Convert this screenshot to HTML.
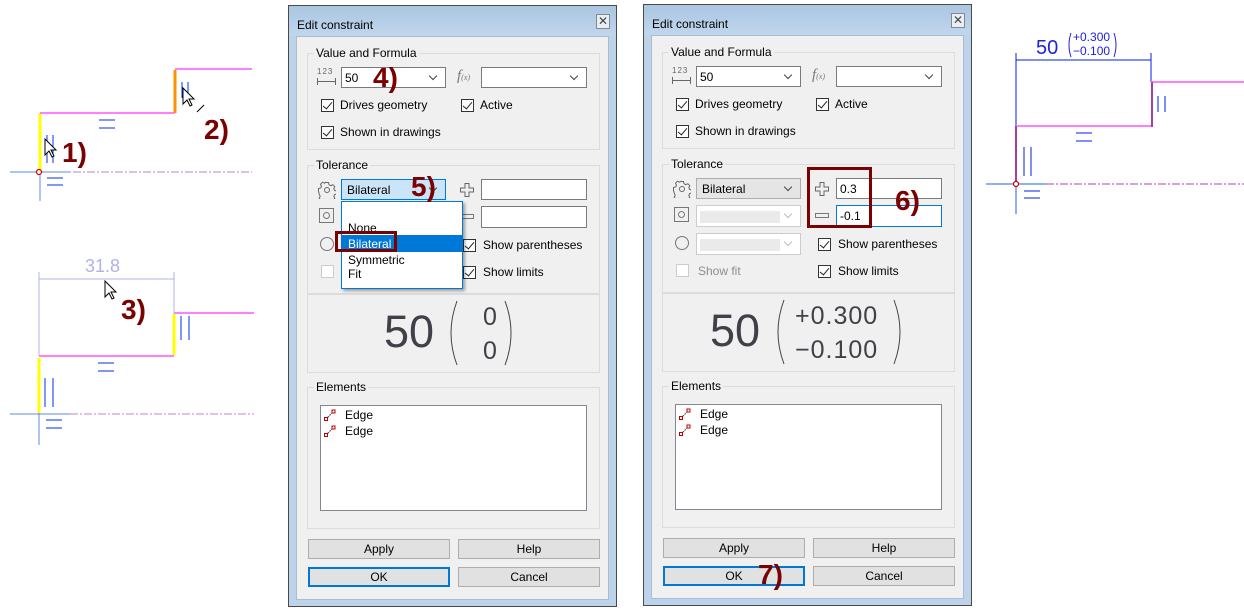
<!DOCTYPE html>
<html><head><meta charset="utf-8"><style>
*{margin:0;padding:0;box-sizing:border-box}
body{width:1244px;height:616px;background:#fff;position:relative;overflow:hidden;font-family:"Liberation Sans",sans-serif;font-size:12px;color:#000}
.a{position:absolute}
.dlg{position:absolute;width:329px;height:602px;border:1px solid #4a4a4a;background:#bcd3ea}
.tb{position:absolute;left:0;top:0;width:327px;height:30px;background:linear-gradient(#abc6e2,#c0d6ec)}
.cl{position:absolute;left:7px;top:30px;width:313px;height:564px;background:#f0f0f0;border:1px solid #a9bdd2}
.grp{position:absolute;border:1px solid #dcdcdc}
.lbl{position:absolute;background:#f0f0f0;padding:0 2px;line-height:13px}
.box{position:absolute;background:#fff;border:1px solid #7a7a7a}
.cb{position:absolute;width:13px;height:13px;border:1px solid #333;background:#fff}
.cb.on::after{content:"";position:absolute;left:3px;top:0px;width:4px;height:8px;border:solid #222;border-width:0 1.3px 1.3px 0;transform:rotate(40deg)}
.t{position:absolute;white-space:nowrap;line-height:14px}
.chev{position:absolute;width:6px;height:6px;border:solid #444;border-width:0 1px 1px 0;transform:rotate(45deg)}
.btn{position:absolute;width:142px;height:20px;background:#e1e1e1;border:1px solid #adadad;text-align:center;line-height:18px}
.btn.def{border:2px solid #0078d7;line-height:16px}
.red{position:absolute;color:#7b0000;font-weight:bold;font-size:28px;line-height:28px}
</style></head><body>

<svg class="a" style="left:0;top:0" width="290" height="460">
<g stroke-width="1">
<line x1="45" y1="172" x2="252" y2="172" stroke="#c080c0" stroke-dasharray="8,2,2,2"/>
<line x1="10" y1="172" x2="70" y2="172" stroke="#5a8de0"/>
<line x1="40" y1="140" x2="40" y2="201" stroke="#5a8de0"/>
<line x1="40" y1="113" x2="40" y2="170" stroke="#ffff00" stroke-width="3"/>
<line x1="40" y1="113" x2="175" y2="113" stroke="#ff80ff" stroke-width="2"/>
<line x1="175" y1="70" x2="175" y2="113" stroke="#ff9000" stroke-width="3"/>
<line x1="175" y1="69" x2="252" y2="69" stroke="#ff80ff" stroke-width="2"/>
<circle cx="39" cy="172" r="2.5" fill="#fff" stroke="#d00000" stroke-width="1.2"/>
<g stroke="#0030f0">
<line x1="99" y1="120" x2="115" y2="120"/><line x1="99" y1="128" x2="115" y2="128"/>
<line x1="47" y1="135" x2="47" y2="163"/><line x1="53" y1="135" x2="53" y2="163"/>
<line x1="47" y1="178" x2="63" y2="178"/><line x1="47" y1="185" x2="63" y2="185"/>
<line x1="182" y1="82" x2="182" y2="98"/><line x1="188" y1="82" x2="188" y2="98"/>
</g>
<line x1="197" y1="112" x2="204" y2="105" stroke="#000"/>
<line x1="70" y1="414" x2="254" y2="414" stroke="#c080c0" stroke-dasharray="8,2,2,2"/>
<line x1="10" y1="414" x2="70" y2="414" stroke="#5a8de0"/>
<line x1="39" y1="388" x2="39" y2="445" stroke="#5a8de0"/>
<line x1="39" y1="279" x2="174" y2="279" stroke="#b0b0f0"/>
<line x1="39" y1="272" x2="39" y2="356" stroke="#b0b0f0"/>
<line x1="174" y1="272" x2="174" y2="314" stroke="#b0b0f0"/>
<line x1="39" y1="358" x2="39" y2="413" stroke="#ffff00" stroke-width="3"/>
<line x1="39" y1="356" x2="174" y2="356" stroke="#ff80ff" stroke-width="2"/>
<line x1="174" y1="314" x2="174" y2="355" stroke="#ffff00" stroke-width="3"/>
<line x1="174" y1="313" x2="254" y2="313" stroke="#ff80ff" stroke-width="2"/>
<g stroke="#0030f0">
<line x1="98" y1="363" x2="114" y2="363"/><line x1="98" y1="371" x2="114" y2="371"/>
<line x1="181" y1="316" x2="181" y2="340"/><line x1="189" y1="316" x2="189" y2="340"/>
<line x1="45" y1="378" x2="45" y2="407"/><line x1="53" y1="378" x2="53" y2="407"/>
<line x1="46" y1="420" x2="62" y2="420"/><line x1="46" y1="428" x2="62" y2="428"/>
</g>
</g>
<text x="85" y="272" font-family="Liberation Sans" font-size="18" fill="#b0b0f0">31.8</text>
<g fill="#fff" stroke="#000" stroke-width="1">
<path d="M45 139 l0 16 l4 -4 l3 6 l2 -1 l-3 -6 l5 0 z"/>
<path d="M183 88 l0 16 l4 -4 l3 6 l2 -1 l-3 -6 l5 0 z"/>
<path d="M105 281 l0 16 l4 -4 l3 6 l2 -1 l-3 -6 l5 0 z"/>
</g>
</svg>
<div class="red" style="left:62px;top:139px">1)</div>
<div class="red" style="left:204px;top:116px">2)</div>
<div class="red" style="left:121px;top:296px">3)</div>

<svg class="a" style="left:980px;top:20px" width="264" height="200">
<g transform="translate(-980,-20)">
<line x1="1046" y1="184" x2="1244" y2="184" stroke="#b040b0" stroke-dasharray="8,2,2,2"/>
<line x1="986" y1="184" x2="1046" y2="184" stroke="#2060e0"/>
<line x1="1016" y1="140" x2="1016" y2="214" stroke="#2060e0"/>
<line x1="1016" y1="53" x2="1016" y2="126" stroke="#0020e0"/>
<line x1="1016" y1="60" x2="1151" y2="60" stroke="#0020e0"/>
<line x1="1151" y1="53" x2="1151" y2="82" stroke="#0020e0"/>
<line x1="1151" y1="82" x2="1244" y2="82" stroke="#ff80ff" stroke-width="2"/>
<line x1="1152" y1="82" x2="1152" y2="127" stroke="#a040a0" stroke-width="2"/>
<line x1="1016" y1="126" x2="1151" y2="126" stroke="#ff80ff" stroke-width="2"/>
<line x1="1016" y1="126" x2="1016" y2="184" stroke="#a040a0" stroke-width="2"/>
<circle cx="1016" cy="184" r="2.5" fill="#fff" stroke="#d00000" stroke-width="1.2"/>
<g stroke="#0020e0">
<line x1="1158" y1="96" x2="1158" y2="112"/><line x1="1165" y1="96" x2="1165" y2="112"/>
<line x1="1076" y1="133" x2="1092" y2="133"/><line x1="1076" y1="141" x2="1092" y2="141"/>
<line x1="1024" y1="147" x2="1024" y2="176"/><line x1="1031" y1="147" x2="1031" y2="176"/>
<line x1="1024" y1="191" x2="1040" y2="191"/><line x1="1024" y1="198" x2="1040" y2="198"/>
</g>
<text x="1036" y="54" font-family="Liberation Sans" font-size="20" fill="#2020e0">50</text>
<text x="1073" y="41" font-family="Liberation Sans" font-size="12" fill="#2020e0">+0.300</text>
<text x="1073" y="55" font-family="Liberation Sans" font-size="12" fill="#2020e0">−0.100</text>
<path d="M1071 33 q-4 12 0 24" fill="none" stroke="#2020e0"/>
<path d="M1114 33 q4 12 0 24" fill="none" stroke="#2020e0"/>
</g>
</svg>

<!-- Dialog 1 -->
<div class="dlg" style="left:288px;top:5px">
 <div class="tb"></div>
 <div class="t" style="left:8px;top:12px;font-size:12px">Edit constraint</div>
 <div class="a" style="left:307px;top:8px;width:14px;height:15px;border:1px solid #888;background:#e8eef5;text-align:center;line-height:12px;font-size:12px;color:#444">✕</div>
 <div class="cl"></div>
 <div class="grp" style="left:18px;top:47px;width:293px;height:97px"></div>
 <div class="lbl" style="left:25px;top:41px">Value and Formula</div>
 <div class="t" style="left:28px;top:59px;font-size:8px;color:#666;letter-spacing:1px">123</div>
 <div class="a" style="left:28px;top:72px;width:19px;height:7px;border:solid #666;border-width:0 1px;"></div>
 <div class="a" style="left:28px;top:75px;width:19px;height:1px;background:#666"></div>
 <div class="box" style="left:52px;top:61px;width:105px;height:21px"><div class="t" style="left:3px;top:3px">50</div><div class="chev" style="left:88px;top:5px"></div></div>
 <div class="t" style="left:168px;top:63px;font-style:italic;color:#777;font-family:'Liberation Serif',serif;font-size:15px">f<span style="font-size:8px">(x)</span></div>
 <div class="box" style="left:192px;top:61px;width:106px;height:21px"><div class="chev" style="left:89px;top:5px"></div></div>
 <div class="cb on" style="left:32px;top:93px"></div><div class="t" style="left:51px;top:92px">Drives geometry</div>
 <div class="cb on" style="left:172px;top:93px"></div><div class="t" style="left:191px;top:92px">Active</div>
 <div class="cb on" style="left:32px;top:120px"></div><div class="t" style="left:51px;top:119px">Shown in drawings</div>
 <div class="grp" style="left:18px;top:159px;width:293px;height:129px"></div>
 <div class="lbl" style="left:25px;top:153px">Tolerance</div>
 <svg class="a" style="left:29px;top:175px" width="18" height="18"><g fill="none" stroke="#666"><circle cx="9" cy="9" r="2.5"/><path d="M7.5 1.5h3l.5 2.2 1.8 1 2-1 2 2-1 2 .8 1.8 2.2.5v3l-2.2.5-.8 1.8 1 2-2 2-2-1-1.8.8-.5 2.2h-3l-.5-2.2-1.8-.8-2 1-2-2 1-2-.8-1.8L.5 10.5v-3l2.2-.5.8-1.8-1-2 2-2 2 1 1.8-1z"/></g></svg>
 <div class="box" style="left:52px;top:173px;width:105px;height:21px;background:#cce4f7;border-color:#0078d7"><div class="t" style="left:5px;top:3px">Bilateral</div><div class="chev" style="left:88px;top:5px"></div></div>
 <svg class="a" style="left:170px;top:176px" width="16" height="16"><path d="M6 1.5h4v4.5h4.5v4H10v4.5H6V10H1.5V6H6z" fill="none" stroke="#666"/></svg>
 <div class="box" style="left:192px;top:173px;width:106px;height:21px"></div>
 <div class="a" style="left:30px;top:202px;width:15px;height:15px;border:1px solid #777"><div class="a" style="left:3px;top:3px;width:7px;height:7px;border:1px solid #777;border-radius:50%"></div></div>
 <div class="a" style="left:171px;top:208px;width:14px;height:5px;border:1px solid #777"></div>
 <div class="box" style="left:192px;top:200px;width:106px;height:22px"></div>
 <div class="a" style="left:31px;top:231px;width:14px;height:14px;border:1px solid #777;border-radius:50%"></div>
 <div class="cb on" style="left:174px;top:233px"></div><div class="t" style="left:194px;top:232px">Show parentheses</div>
 <div class="a" style="left:32px;top:259px;width:13px;height:13px;border:1px solid #ccc;background:#fff"></div>
 <div class="cb on" style="left:174px;top:260px"></div><div class="t" style="left:194px;top:259px">Show limits</div>
 <div class="a" style="left:52px;top:195px;width:122px;height:88px;background:#fff;border:1px solid #0078d7;box-shadow:2px 2px 3px rgba(0,0,0,.35)">
  <div class="t" style="left:6px;top:19px">None</div>
  <div class="a" style="left:0;top:33px;width:120px;height:17px;background:#0078d7"></div>
  <div class="t" style="left:6px;top:35px;color:#fff">Bilateral</div>
  <div class="t" style="left:6px;top:51px">Symmetric</div>
  <div class="t" style="left:6px;top:65px">Fit</div>
 </div>
 <div class="a" style="left:46px;top:225px;width:62px;height:21px;border:3px solid #7b0000"></div>
 <div class="grp" style="left:18px;top:288px;width:293px;height:79px"></div>
 <div class="t" style="left:95px;top:303px;font-size:45px;line-height:46px;color:#404048">50</div>
 <svg class="a" style="left:158px;top:293px" width="80" height="70"><path d="M10 2 q-12 32 0 64" fill="none" stroke="#444"/><path d="M58 2 q12 32 0 64" fill="none" stroke="#444"/></svg>
 <div class="t" style="left:194px;top:298px;font-size:25px;line-height:26px;color:#404048">0</div>
 <div class="t" style="left:194px;top:332px;font-size:25px;line-height:26px;color:#404048">0</div>
 <div class="grp" style="left:18px;top:381px;width:293px;height:142px"></div>
 <div class="lbl" style="left:25px;top:375px">Elements</div>
 <div class="box" style="left:31px;top:399px;width:267px;height:106px;border-color:#828790">
  <svg class="a" style="left:3px;top:3px" width="12" height="30"><g fill="#fff" stroke="#c00000"><line x1="2" y1="10" x2="9" y2="3" stroke="#333" stroke-dasharray="1.5,1"/><rect x="0.5" y="8.5" width="3" height="3"/><rect x="8" y="1" width="3" height="3"/><line x1="2" y1="26" x2="9" y2="19" stroke="#333" stroke-dasharray="1.5,1"/><rect x="0.5" y="24.5" width="3" height="3"/><rect x="8" y="17" width="3" height="3"/></g></svg>
  <div class="t" style="left:24px;top:2px">Edge</div><div class="t" style="left:24px;top:18px">Edge</div>
 </div>
 <div class="btn" style="left:19px;top:533px">Apply</div>
 <div class="btn" style="left:169px;top:533px">Help</div>
 <div class="btn def" style="left:19px;top:561px">OK</div>
 <div class="btn" style="left:169px;top:561px">Cancel</div>
 <div class="red" style="left:84px;top:58px">4)</div>
 <div class="red" style="left:122px;top:167px">5)</div>
</div>

<!-- Dialog 2 -->
<div class="dlg" style="left:643px;top:4px">
 <div class="tb"></div>
 <div class="t" style="left:8px;top:12px;font-size:12px">Edit constraint</div>
 <div class="a" style="left:307px;top:8px;width:14px;height:15px;border:1px solid #888;background:#e8eef5;text-align:center;line-height:12px;font-size:12px;color:#444">✕</div>
 <div class="cl"></div>
 <div class="grp" style="left:18px;top:47px;width:293px;height:97px"></div>
 <div class="lbl" style="left:25px;top:41px">Value and Formula</div>
 <div class="t" style="left:28px;top:59px;font-size:8px;color:#666;letter-spacing:1px">123</div>
 <div class="a" style="left:28px;top:72px;width:19px;height:7px;border:solid #666;border-width:0 1px;"></div>
 <div class="a" style="left:28px;top:75px;width:19px;height:1px;background:#666"></div>
 <div class="box" style="left:52px;top:61px;width:105px;height:21px"><div class="t" style="left:3px;top:3px">50</div><div class="chev" style="left:88px;top:5px"></div></div>
 <div class="t" style="left:168px;top:63px;font-style:italic;color:#777;font-family:'Liberation Serif',serif;font-size:15px">f<span style="font-size:8px">(x)</span></div>
 <div class="box" style="left:192px;top:61px;width:106px;height:21px"><div class="chev" style="left:89px;top:5px"></div></div>
 <div class="cb on" style="left:32px;top:93px"></div><div class="t" style="left:51px;top:92px">Drives geometry</div>
 <div class="cb on" style="left:172px;top:93px"></div><div class="t" style="left:191px;top:92px">Active</div>
 <div class="cb on" style="left:32px;top:120px"></div><div class="t" style="left:51px;top:119px">Shown in drawings</div>
 <div class="grp" style="left:18px;top:159px;width:293px;height:129px"></div>
 <div class="lbl" style="left:25px;top:153px">Tolerance</div>
 <svg class="a" style="left:29px;top:175px" width="18" height="18"><g fill="none" stroke="#666"><circle cx="9" cy="9" r="2.5"/><path d="M7.5 1.5h3l.5 2.2 1.8 1 2-1 2 2-1 2 .8 1.8 2.2.5v3l-2.2.5-.8 1.8 1 2-2 2-2-1-1.8.8-.5 2.2h-3l-.5-2.2-1.8-.8-2 1-2-2 1-2-.8-1.8L.5 10.5v-3l2.2-.5.8-1.8-1-2 2-2 2 1 1.8-1z"/></g></svg>
 <div class="a" style="left:52px;top:173px;width:105px;height:21px;background:#e5e5e5;border:1px solid #adadad"><div class="t" style="left:5px;top:3px">Bilateral</div><div class="chev" style="left:88px;top:5px"></div></div>
 <svg class="a" style="left:170px;top:176px" width="16" height="16"><path d="M6 1.5h4v4.5h4.5v4H10v4.5H6V10H1.5V6H6z" fill="none" stroke="#666"/></svg>
 <div class="box" style="left:192px;top:173px;width:106px;height:21px"><div class="t" style="left:3px;top:3px">0.3</div></div>
 <div class="a" style="left:30px;top:202px;width:15px;height:15px;border:1px solid #777"><div class="a" style="left:3px;top:3px;width:7px;height:7px;border:1px solid #777;border-radius:50%"></div></div>
 <div class="a" style="left:52px;top:200px;width:105px;height:22px;background:#fff;border:1px solid #ccc"><div class="a" style="left:3px;top:5px;width:80px;height:12px;background:#eaeaea"></div><div class="chev" style="left:88px;top:5px;border-color:#bbb"></div></div>
 <div class="a" style="left:171px;top:208px;width:14px;height:5px;border:1px solid #777"></div>
 <div class="box" style="left:192px;top:200px;width:106px;height:22px;border-color:#0078d7"><div class="t" style="left:3px;top:3px">-0.1</div></div>
 <div class="a" style="left:31px;top:231px;width:14px;height:14px;border:1px solid #777;border-radius:50%"></div>
 <div class="a" style="left:52px;top:228px;width:105px;height:22px;background:#fff;border:1px solid #ccc"><div class="a" style="left:3px;top:5px;width:80px;height:12px;background:#eaeaea"></div><div class="chev" style="left:88px;top:5px;border-color:#bbb"></div></div>
 <div class="cb on" style="left:174px;top:233px"></div><div class="t" style="left:194px;top:232px">Show parentheses</div>
 <div class="a" style="left:32px;top:259px;width:13px;height:13px;border:1px solid #ccc;background:#fff"></div><div class="t" style="left:54px;top:259px;color:#8d8d8d">Show fit</div>
 <div class="cb on" style="left:174px;top:260px"></div><div class="t" style="left:194px;top:259px">Show limits</div>
 <div class="a" style="left:163px;top:162px;width:65px;height:61px;border:3px solid #7b0000"></div>
 <div class="red" style="left:251px;top:182px">6)</div>
 <div class="grp" style="left:18px;top:288px;width:293px;height:79px"></div>
 <div class="t" style="left:66px;top:303px;font-size:45px;line-height:46px;color:#404048">50</div>
 <svg class="a" style="left:128px;top:293px" width="140" height="70"><path d="M12 2 q-12 32 0 64" fill="none" stroke="#444"/><path d="M122 2 q12 32 0 64" fill="none" stroke="#444"/></svg>
 <div class="t" style="left:151px;top:298px;font-size:25px;line-height:26px;color:#404048;letter-spacing:1px">+0.300</div>
 <div class="t" style="left:151px;top:332px;font-size:25px;line-height:26px;color:#404048;letter-spacing:1px">−0.100</div>
 <div class="grp" style="left:18px;top:381px;width:293px;height:142px"></div>
 <div class="lbl" style="left:25px;top:375px">Elements</div>
 <div class="box" style="left:31px;top:399px;width:267px;height:106px;border-color:#828790">
  <svg class="a" style="left:3px;top:3px" width="12" height="30"><g fill="#fff" stroke="#c00000"><line x1="2" y1="10" x2="9" y2="3" stroke="#333" stroke-dasharray="1.5,1"/><rect x="0.5" y="8.5" width="3" height="3"/><rect x="8" y="1" width="3" height="3"/><line x1="2" y1="26" x2="9" y2="19" stroke="#333" stroke-dasharray="1.5,1"/><rect x="0.5" y="24.5" width="3" height="3"/><rect x="8" y="17" width="3" height="3"/></g></svg>
  <div class="t" style="left:24px;top:2px">Edge</div><div class="t" style="left:24px;top:18px">Edge</div>
 </div>
 <div class="btn" style="left:19px;top:533px">Apply</div>
 <div class="btn" style="left:169px;top:533px">Help</div>
 <div class="btn def" style="left:19px;top:561px">OK</div>
 <div class="btn" style="left:169px;top:561px">Cancel</div>
 <div class="red" style="left:114px;top:556px">7)</div>
</div>
</body></html>
